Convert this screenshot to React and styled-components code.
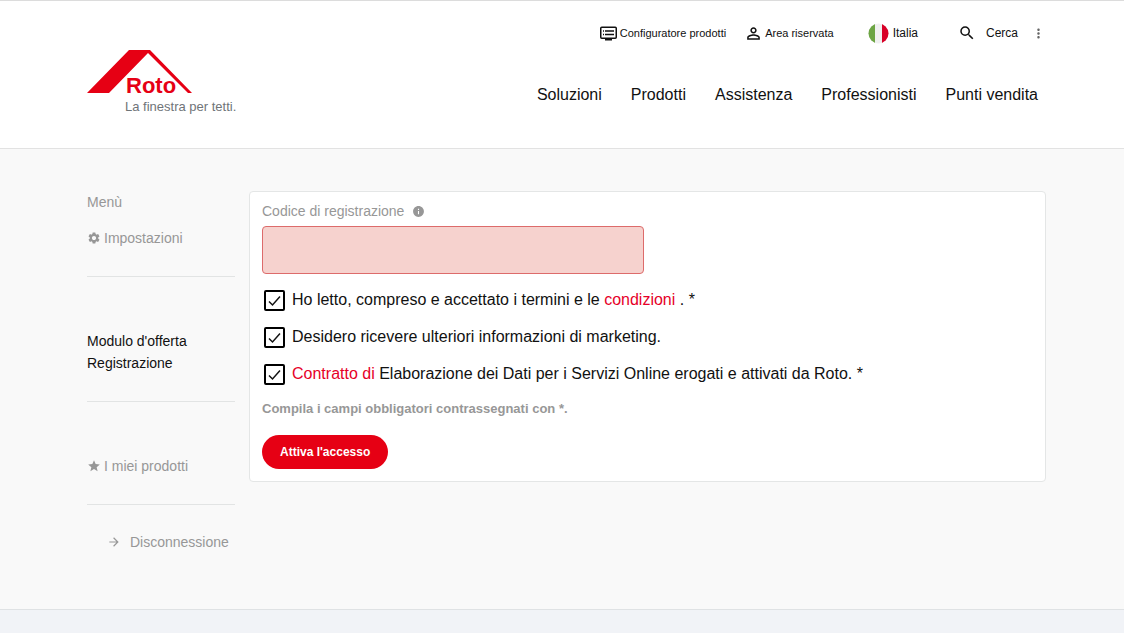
import React from "react";
import styled, { createGlobalStyle } from "styled-components";
import {
  MdPersonOutline,
  MdSearch,
  MdMoreVert,
  MdSettings,
  MdInfo,
  MdStar,
  MdArrowForward,
} from "react-icons/md";

const GlobalStyle = createGlobalStyle`
  *, *::before, *::after { box-sizing: border-box; }
  body {
    margin: 0;
    background: #f9f9f9;
    color: #111;
    font-family: "Liberation Sans", Arial, sans-serif;
    font-size: 16px;
  }
  a { color: inherit; text-decoration: none; }
`;

const Page = styled.div`
  display: flex;
  flex-direction: column;
  min-height: 100vh;
`;

const Header = styled.header`
  display: flex;
  justify-content: space-between;
  align-items: flex-start;
  padding: 19px 78px 34px 87px;
  background: #fff;
  border-top: 1px solid #dcdcdc;
  border-bottom: 1px solid #e2e2e2;
`;

const LogoLink = styled.a`
  display: block;
  padding-top: 30px;

  svg { display: block; }
`;

const HeaderRight = styled.div`
  display: flex;
  flex-direction: column;
  align-items: flex-end;
  gap: 38px;
`;

const Utilities = styled.div`
  display: flex;
  align-items: center;
  height: 26px;
`;

const UtilityLink = styled.a`
  display: flex;
  align-items: center;
  gap: ${(p) => p.$gap || 4}px;
  margin-left: ${(p) => p.$before || 0}px;
  font-size: ${(p) => (p.$large ? 12 : 11)}px;
  white-space: nowrap;
`;

const MoreButton = styled.button`
  display: flex;
  margin: 0 0 0 13px;
  padding: 0;
  border: 0;
  background: none;
  color: #666;
`;

const Nav = styled.nav`
  display: flex;
  gap: 29px;
  padding-right: 8px;
  line-height: 22px;
  white-space: nowrap;
`;

const Main = styled.main`
  display: flex;
  align-items: flex-start;
  gap: 14px;
  padding: 42px 78px 56px 87px;
`;

const Sidebar = styled.aside`
  flex: 0 0 148px;
  color: #979797;
  font-size: 14px;
  line-height: 22px;
`;

const MenuGroup = styled.div`
  display: flex;
  flex-direction: column;
  gap: ${(p) => p.$gap || 0}px;
  padding: ${(p) => (p.$first ? 0 : 53)}px 0 27px;
  border-bottom: 1px solid #e2e4e4;
  color: ${(p) => (p.$active ? "#111" : "inherit")};
`;

const MenuTitle = styled.span``;

const MenuLink = styled.a`
  display: flex;
  align-items: center;
  gap: 3px;
`;

const Logout = styled(MenuLink)`
  gap: 9px;
  padding: 26px 0 0 20px;
`;

const Card = styled.form`
  flex: 1;
  display: flex;
  flex-direction: column;
  align-items: flex-start;
  padding: 8px 12px 12px;
  background: #fff;
  border: 1px solid #e4e6e6;
  border-radius: 4px;
`;

const FieldLabel = styled.label`
  display: flex;
  align-items: center;
  gap: 8px;
  margin-bottom: 4px;
  color: #979797;
  font-size: 14px;
  line-height: 22px;
`;

const CodeInput = styled.input`
  width: 100%;
  max-width: 382px;
  height: 48px;
  padding: 0 12px;
  border: 1px solid #dd6b6b;
  border-radius: 4px;
  background: #f6d2ce;
  font: inherit;
  outline: none;
`;

const CheckList = styled.div`
  display: flex;
  flex-direction: column;
  gap: 15px;
  margin: 15px 0 13px 2px;
`;

const CheckRow = styled.label`
  display: flex;
  align-items: center;
  gap: 7px;
  line-height: 22px;
`;

const CheckWrap = styled.span`
  position: relative;
  display: flex;

  svg {
    position: absolute;
    inset: 0;
    pointer-events: none;
  }
`;

const CheckInput = styled.input`
  appearance: none;
  width: 21px;
  height: 21px;
  margin: 0;
  border: 2px solid #000;
  border-radius: 2px;
  background: #fff;

  &:not(:checked) + svg { display: none; }
`;

const RedLink = styled.a`
  && { color: #e60028; }
`;

const RequiredNote = styled.p`
  margin: 0 0 15px;
  color: #979797;
  font-size: 13px;
  font-weight: 700;
  line-height: 22px;
`;

const SubmitButton = styled.button`
  height: 34px;
  padding: 0 18px;
  border: 0;
  border-radius: 17px;
  background: #e60014;
  color: #fff;
  font: 700 12px "Liberation Sans", Arial, sans-serif;
`;

const Footer = styled.footer`
  flex: 1;
  background: #f1f3f7;
  border-top: 1px solid #dfe2e4;
`;

function Logo() {
  return (
    <svg width="150" height="64" viewBox="0 0 150 64" role="img" aria-label="Roto">
      <path d="M42 0H63L105 43H101L61 3L22 43H0Z" fill="#e60014" />
      <text x="39" y="43" fontSize="22" fontWeight="700" fill="#e60014">
        Roto
      </text>
      <text x="38" y="61" fontSize="13" fill="#6f7478">
        La finestra per tetti.
      </text>
    </svg>
  );
}

function ConfiguratorIcon() {
  return (
    <svg width="17" height="15" viewBox="0 0 17 15" fill="none" aria-hidden="true">
      <rect x="0.75" y="1.25" width="15.5" height="11" rx="1" stroke="#111" strokeWidth="1.5" />
      <path d="M3 5H4M5 5H14M3 8.5H4M5 8.5H14" stroke="#111" strokeWidth="1.6" />
      <path d="M5 12H12V14.5H5Z" fill="#111" />
    </svg>
  );
}

function ItalianFlag() {
  return (
    <svg width="21" height="21" viewBox="0 0 21 21" aria-hidden="true">
      <clipPath id="flag-disc">
        <circle cx="10.5" cy="10.5" r="10" />
      </clipPath>
      <g clipPath="url(#flag-disc)">
        <rect width="21" height="21" fill="#f0f0f0" />
        <rect width="7" height="21" fill="#6da544" />
        <rect x="14" width="7" height="21" fill="#d80027" />
      </g>
    </svg>
  );
}

function Check({ children }) {
  return (
    <CheckRow>
      <CheckWrap>
        <CheckInput type="checkbox" defaultChecked />
        <svg width="21" height="21" viewBox="0 0 21 21" fill="none" aria-hidden="true">
          <path d="M5 11.5L8.5 15L16 6.5" stroke="#111" strokeWidth="1.5" />
        </svg>
      </CheckWrap>
      <span>{children}</span>
    </CheckRow>
  );
}

const sections = ["Soluzioni", "Prodotti", "Assistenza", "Professionisti", "Punti vendita"];

export default function App() {
  return (
    <Page>
      <GlobalStyle />
      <Header>
        <LogoLink href="#">
          <Logo />
        </LogoLink>
        <HeaderRight>
          <Utilities>
            <UtilityLink href="#" $gap={3}>
              <ConfiguratorIcon />
              Configuratore prodotti
            </UtilityLink>
            <UtilityLink href="#" $before={18} $gap={2}>
              <MdPersonOutline size={19} />
              Area riservata
            </UtilityLink>
            <UtilityLink href="#" $before={34} $gap={4} $large>
              <ItalianFlag />
              Italia
            </UtilityLink>
            <UtilityLink href="#" $before={40} $gap={10} $large>
              <MdSearch size={18} />
              Cerca
            </UtilityLink>
            <MoreButton type="button" aria-label="Altro">
              <MdMoreVert size={15} />
            </MoreButton>
          </Utilities>
          <Nav>
            {sections.map((s) => (
              <a href="#" key={s}>
                {s}
              </a>
            ))}
          </Nav>
        </HeaderRight>
      </Header>
      <Main>
        <Sidebar>
          <MenuGroup $first $gap={14}>
            <MenuTitle>Menù</MenuTitle>
            <MenuLink href="#">
              <MdSettings size={14} />
              Impostazioni
            </MenuLink>
          </MenuGroup>
          <MenuGroup $active>
            <MenuLink href="#">Modulo d'offerta</MenuLink>
            <MenuLink href="#">Registrazione</MenuLink>
          </MenuGroup>
          <MenuGroup>
            <MenuLink href="#">
              <MdStar size={14} />
              I miei prodotti
            </MenuLink>
          </MenuGroup>
          <Logout href="#">
            <MdArrowForward size={14} />
            Disconnessione
          </Logout>
        </Sidebar>
        <Card onSubmit={(e) => e.preventDefault()}>
          <FieldLabel htmlFor="code">
            Codice di registrazione
            <MdInfo size={13} />
          </FieldLabel>
          <CodeInput id="code" type="text" />
          <CheckList>
            <Check>
              Ho letto, compreso e accettato i termini e le <RedLink href="#">condizioni</RedLink> . *
            </Check>
            <Check>Desidero ricevere ulteriori informazioni di marketing.</Check>
            <Check>
              <RedLink href="#">Contratto di</RedLink> Elaborazione dei Dati per i Servizi Online erogati e attivati da
              Roto. *
            </Check>
          </CheckList>
          <RequiredNote>Compila i campi obbligatori contrassegnati con *.</RequiredNote>
          <SubmitButton type="submit">Attiva l'accesso</SubmitButton>
        </Card>
      </Main>
      <Footer />
    </Page>
  );
}
